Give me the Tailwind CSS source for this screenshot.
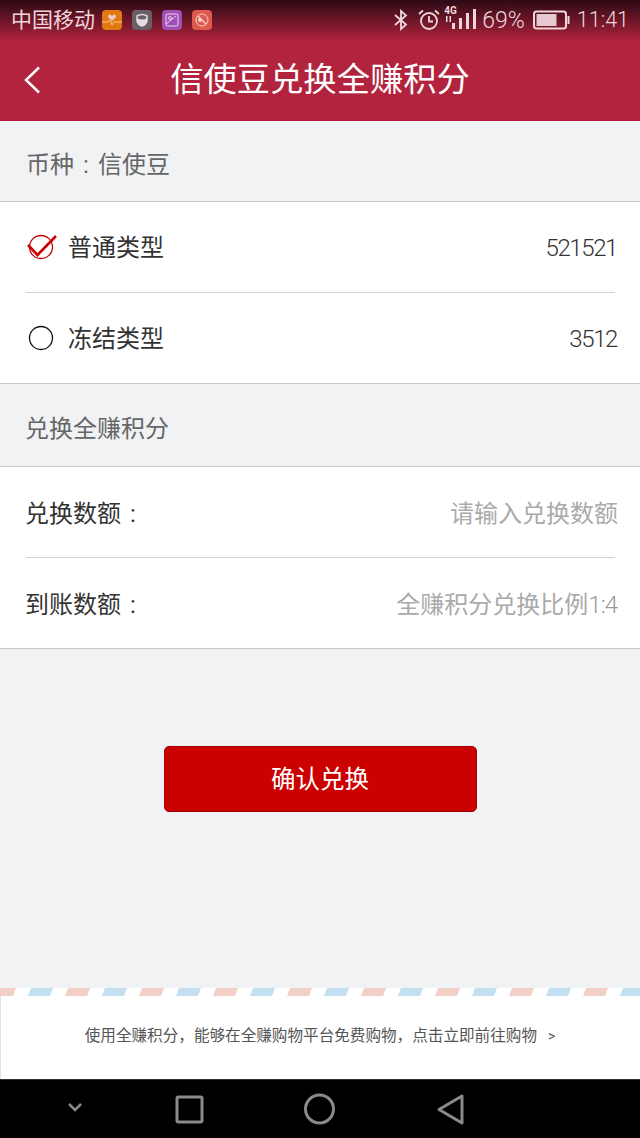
<!DOCTYPE html>
<html lang="zh-CN">
<head>
    <meta charset="UTF-8">
    <meta name="viewport" content="width=device-width, initial-scale=1.0">
    <title>信使豆兑换全赚积分</title>
    <script src="https://cdn.jsdelivr.net/npm/@tailwindcss/browser@4"></script>
</head>
<body class="bg-[#f1f2f4] font-['Roboto','Noto_Sans_CJK_SC',sans-serif]">
    <div class="w-[640px] h-[1138px] flex flex-col overflow-hidden relative">
        <!-- header + status bar -->
        <header class="h-[121px] shrink-0 bg-[#b2233d] border-b border-[#b5173c] flex flex-col relative">
            <div class="absolute top-0 left-0 right-0 h-[42px] bg-linear-to-b from-[#2c0a14] to-[#b2233d]/0"></div>
            <div class="relative h-[40px] flex items-center pl-[11px] pr-[11px] text-[#f0d6dc] text-[21px]">
                <span class="leading-none w-[83px] whitespace-nowrap">中国移动</span>
                <div class="flex gap-[10px] ml-[8px]">
                    <svg class="w-[20px] h-[20px]" viewBox="0 0 20 20">
                        <rect width="20" height="20" rx="4" fill="#e0790f"/>
                        <path d="M10 11 L6 7 Q6 4 8 4.500 L10 6 L12 4.500 Q14.500 4 14 7Z" fill="#ecc8d0"/>
                        <path d="M0 12H6L8 10L10 15L12 12H20" fill="none" stroke="#f4c98a" stroke-width="1"/>
                    </svg>
                    <svg class="w-[20px] h-[20px]" viewBox="0 0 20 20">
                        <rect width="20" height="20" rx="4" fill="#6b5f66"/>
                        <path d="M5 6Q10 3 15 6V11Q14 15 10 16Q6 15 5 11Z" fill="none" stroke="#e5dcdf" stroke-width="1.500"/>
                        <path d="M5 8Q10 11 15 8V11Q14 15 10 16Q6 15 5 11Z" fill="#e5dcdf"/>
                    </svg>
                    <svg class="w-[20px] h-[20px]" viewBox="0 0 20 20">
                        <rect width="20" height="20" rx="4" fill="#a04fb4"/>
                        <rect x="4" y="4" width="12" height="12" rx="1" fill="none" stroke="#e9d4ee" stroke-width="1"/>
                        <path d="M4 14L14 6" stroke="#e9d4ee" stroke-width="1"/>
                        <circle cx="8" cy="8" r="1.500" fill="none" stroke="#e9d4ee"/>
                    </svg>
                    <svg class="w-[20px] h-[20px]" viewBox="0 0 20 20">
                        <rect width="20" height="20" rx="4" fill="#dd5a4c"/>
                        <circle cx="10" cy="10" r="6" fill="none" stroke="#f3cfc9" stroke-width="1"/>
                        <path d="M6 6L14 14" stroke="#f3cfc9" stroke-width="1.500"/>
                        <circle cx="8" cy="10" r="2" fill="#f3cfc9"/>
                    </svg>
                </div>
                <div class="ml-auto flex items-center">
                    <svg class="w-[16px] h-[22px]" viewBox="0 0 16 22" fill="none" stroke="#f0d6dc" stroke-width="1.800">
                        <path d="M2 6L13 15.500L8 20V2L13 6.500L2 16"/>
                    </svg>
                    <svg class="w-[24px] h-[24px] ml-[8px]" viewBox="0 0 24 24" fill="none" stroke="#f0d6dc" stroke-width="1.800">
                        <circle cx="12" cy="13" r="8"/>
                        <path d="M12 8V13.500H16"/>
                        <path d="M2 6L6 2.500M22 6L18 2.500"/>
                    </svg>
                    <div class="w-[33px] h-[25px] ml-[3px] mb-[5px] relative">
                        <span class="absolute left-0 top-0 text-[10px] font-bold leading-[11px] text-[#f0d6dc]">4G</span>
                        <svg class="absolute left-0 top-0 w-[33px] h-[25px]" viewBox="0 0 33 25" fill="#f0d6dc">
                            <path d="M3.500 11V17H2V11ZM7 11V17H5.500V11Z"/>
                            <rect x="8" y="18" width="3" height="6"/>
                            <rect x="15" y="13" width="3" height="11"/>
                            <rect x="22" y="8" width="3" height="16"/>
                            <rect x="29" y="4" width="3" height="20"/>
                        </svg>
                    </div>
                    <span class="ml-[5px] text-[23px] leading-none font-light">69%</span>
                    <svg class="w-[37px] h-[20px] ml-[8px]" viewBox="0 0 37 20" fill="none">
                        <rect x="1" y="1.500" width="32" height="17" rx="2.500" stroke="#f0d6dc" stroke-width="2"/>
                        <rect x="3.500" y="4" width="20" height="12" fill="#e5c8d0"/>
                        <rect x="34.500" y="6" width="2" height="8" fill="#f0d6dc"/>
                    </svg>
                    <span class="ml-[7px] text-[21.500px] leading-none font-light">11:41</span>
                </div>
            </div>
            <div class="relative flex-1 flex items-center justify-center">
                <svg class="absolute left-[24px] top-[26px] w-[16px] h-[28px]" viewBox="0 0 16 28" fill="none" stroke="#fff" stroke-width="2.500">
                    <path d="M15 1.500L2 14L15 26.500"/>
                </svg>
                <h1 class="text-white text-[33.300px] leading-none mt-[-1px]">信使豆兑换全赚积分</h1>
            </div>
        </header>

        <div class="h-[80px] shrink-0 flex items-center pl-[26px] pt-[7px] text-[24px] text-[#666]">币种<span class="w-[24px] text-center">:</span>信使豆</div>

        <section class="bg-white border-y border-[#c8c8c8] h-[183px] shrink-0 flex flex-col">
            <div class="h-[90px] flex items-center justify-between pl-[26px] pr-[23px] pt-[2px] text-[24px] text-[#333]">
                <div class="flex items-center">
                    <svg class="w-[32px] h-[28px] mt-[-2px]" viewBox="0 0 32 28" fill="none">
                        <circle cx="15" cy="14" r="11.500" stroke="#cc0000" stroke-width="1.300"/>
                        <path d="M2 12L11.500 22L30 3" stroke="#cc0000" stroke-width="2.600"/>
                    </svg>
                    <span class="ml-[10px]">普通类型</span>
                </div>
                <span class="font-light tracking-[-1.400px]">521521</span>
            </div>
            <div class="h-px bg-[#d2d2d2] ml-[26px] mr-[25px]"></div>
            <div class="h-[90px] flex items-center justify-between pl-[26px] pr-[23px] pt-[2px] text-[24px] text-[#333]">
                <div class="flex items-center">
                    <svg class="w-[32px] h-[28px] mt-[-2px]" viewBox="0 0 32 28" fill="none">
                        <circle cx="15" cy="14" r="11.500" stroke="#111" stroke-width="1.300"/>
                    </svg>
                    <span class="ml-[10px]">冻结类型</span>
                </div>
                <span class="font-light tracking-[-1.400px]">3512</span>
            </div>
        </section>

        <div class="h-[82px] shrink-0 flex items-center pl-[25px] pt-[7px] text-[24px] text-[#666]">兑换全赚积分</div>

        <section class="bg-white border-y border-[#c8c8c8] h-[183px] shrink-0 flex flex-col">
            <div class="h-[90px] flex items-center justify-between pl-[25px] pr-[22px] pt-[3px] text-[24px]">
                <span class="text-[#333]">兑换数额<span class="inline-block w-[24px] text-center">:</span></span>
                <span class="text-[#aaa]">请输入兑换数额</span>
            </div>
            <div class="h-px bg-[#d2d2d2] ml-[26px] mr-[25px]"></div>
            <div class="h-[90px] flex items-center justify-between pl-[25px] pr-[23px] pt-[3px] text-[24px]">
                <span class="text-[#333]">到账数额<span class="inline-block w-[24px] text-center">:</span></span>
                <span class="text-[#aaa]">全赚积分兑换比例<span class="font-light tracking-[-1px] text-[#999]">1:4</span></span>
            </div>
        </section>

        <div class="flex-1 flex justify-center pt-[97px]">
            <button class="w-[313px] h-[66px] bg-[#cc0000] border border-[#a80000] rounded-[5px] pt-[2px] text-white text-[24.500px]">确认兑换</button>
        </div>

        <!-- airmail footer -->
        <footer class="h-[91px] shrink-0 bg-white relative flex items-center justify-center pr-[1px] border-l border-[#e4e4e4]">
            <svg class="absolute left-[-1px] top-0 w-[640px] h-[8px]" viewBox="0 0 640 8">
                <defs>
                    <pattern id="air" width="74" height="8" patternUnits="userSpaceOnUse" x="-11">
                        <polygon points="2,8 5,0 27,0 24,8" fill="#f2d0c8"/>
                        <polygon points="39,8 42,0 64,0 61,8" fill="#c2e0f2"/>
                    </pattern>
                </defs>
                <rect width="640" height="8" fill="url(#air)"/>
            </svg>
            <p class="text-[15.600px] text-[#555] mt-[5px] whitespace-nowrap">使用全赚积分<span class="font-['Noto_Sans_CJK_TC']">，</span>能够在全赚购物平台免费购物<span class="font-['Noto_Sans_CJK_TC']">，</span>点击立即前往购物<span class="ml-[11px] text-[14px]">&gt;</span></p>
        </footer>

        <!-- android nav -->
        <nav class="h-[59px] shrink-0 bg-black border-t border-[#333] relative">
            <svg class="absolute left-0 top-0 w-[640px] h-[58px]" viewBox="0 0 640 58" fill="none" stroke="#8a8a8a" stroke-width="3">
                <path d="M69 24L75 30L81 24" stroke-width="2.500"/>
                <rect x="177" y="17" width="25" height="25" rx="1.500"/>
                <circle cx="319.500" cy="29" r="14"/>
                <path d="M462 16V43L439 29.500Z" stroke-linejoin="round"/>
            </svg>
        </nav>
    </div>
</body>
</html>
